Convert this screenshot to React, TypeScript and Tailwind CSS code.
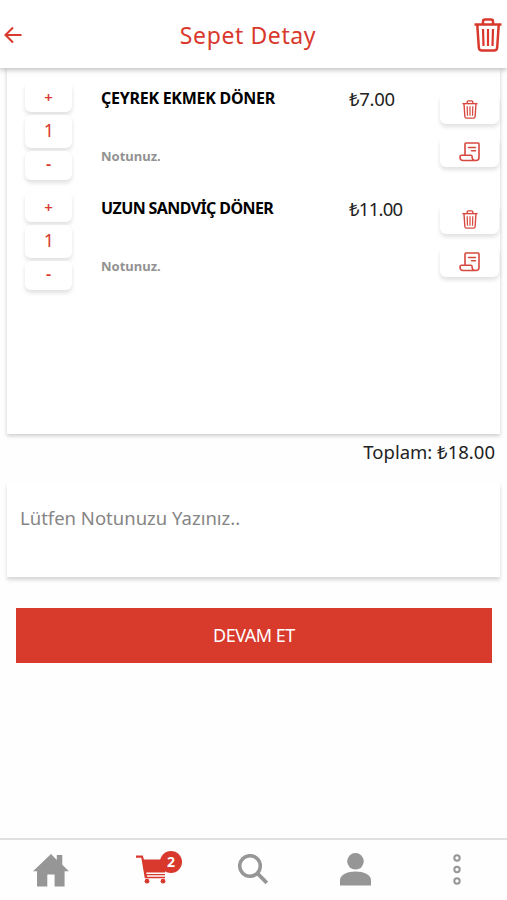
import React from "react";

type CartItem = { name: string; price: string; quantity: number; nameClass: string; priceClass: string };

const items: CartItem[] = [
  { name: "ÇEYREK EKMEK DÖNER", price: "₺7.00", quantity: 1, nameClass: "tracking-[-0.26px]", priceClass: "tracking-[-0.3px]" },
  { name: "UZUN SANDVİÇ DÖNER", price: "₺11.00", quantity: 1, nameClass: "tracking-[-0.6px]", priceClass: "tracking-[-0.75px]" },
];

function BackIcon() {
  return (
    <svg className="h-[18px] w-[18px]" viewBox="0 0 18 18" fill="none" stroke="currentColor" strokeWidth="2.1">
      <path d="M17.500 9H2M9 1.500 1.500 9 9 16.500" />
    </svg>
  );
}

function TrashIcon({ className }: { className: string }) {
  return (
    <svg className={className} viewBox="0 0 28 34" fill="none" stroke="currentColor" strokeWidth="2.500" strokeLinejoin="round">
      <path d="M.5 6.500h27" />
      <path d="M9 6V3.500Q9 1.500 11 1.500h6q2 0 2 2V6" />
      <path d="m3.300 7 1.500 22.500q.2 3 3.200 3h12q3 0 3.200-3L24.700 7" />
      <path d="m9 11 .5 17M14 11v17M19 11l-.5 17" strokeWidth="2.200" />
    </svg>
  );
}

function NoteIcon() {
  return (
    <svg className="h-[20px] w-[21px]" viewBox="0 0 21 20" fill="none" stroke="currentColor" strokeWidth="1.600" strokeLinejoin="round" strokeLinecap="round">
      <path d="M6 12.500V2Q6 1 7 1h12q1 0 1 1v13.500q0 3-3 3H4.200Q1 18.500 1 15.200q0-2 1.500-2h9.300q1.300 0 1.300 1.600 0 3.700 3.500 3.700" />
      <path d="M9.500 5.500h7M12.500 8.800h4" />
    </svg>
  );
}

function HomeIcon() {
  return (
    <svg className="h-[33px] w-[36px]" viewBox="0 0 36 33" fill="currentColor">
      <path d="M18 0 0 17.200h4V32.500h10.300V20.500h7.300v12h10V17.200H36l-6.700-6.400V1h-5.500v5z" />
    </svg>
  );
}

function CartIcon() {
  return (
    <svg className="h-[29px] w-[32px]" viewBox="0 0 32 29" fill="currentColor">
      <path d="M0 .5h6.800l1.100 4H31l-2 13H10.200l.4 1.500H29v1.200H10.800l.3 1.500H29v1.600H8.800L5.300 2.800H0z" />
      <circle cx="11" cy="26.200" r="2.400" />
      <circle cx="27" cy="26.200" r="2.400" />
    </svg>
  );
}

function SearchIcon() {
  return (
    <svg className="h-[31px] w-[31px]" viewBox="0 0 31 31" fill="none" stroke="currentColor">
      <circle cx="12" cy="12" r="10.300" strokeWidth="3.500" />
      <path d="m19.500 19.500 9.300 9.300" strokeWidth="3.800" />
    </svg>
  );
}

function UserIcon() {
  return (
    <svg className="h-[33px] w-[31px]" viewBox="0 0 31 33" fill="currentColor">
      <circle cx="15.500" cy="8.300" r="8.300" />
      <path d="M0 32.500v-5.200C0 22 7.500 18.600 15.500 18.600S31 22 31 27.300v5.200z" />
    </svg>
  );
}

function MoreIcon() {
  return (
    <svg className="h-[31px] w-[8px]" viewBox="0 0 8 31" fill="none" stroke="currentColor" strokeWidth="2">
      <circle cx="4" cy="4" r="2.700" />
      <circle cx="4" cy="15.500" r="2.700" />
      <circle cx="4" cy="27" r="2.700" />
    </svg>
  );
}

function CartRow({ item }: { item: CartItem }) {
  return (
    <li className="flex h-[110px] items-start pl-[18px]">
      <div className="flex w-[47px] flex-col gap-[3px] pt-[2px] text-[#d8392c]">
        <button className="h-[30px] rounded-[6px] bg-white text-[15px] leading-[28px] font-semibold shadow-[0_3px_4px_rgba(0,0,0,0.12)]">+</button>
        <span className="h-[33px] rounded-[6px] bg-white pl-px text-center text-[18px] leading-[31px] shadow-[0_3px_4px_rgba(0,0,0,0.12)]">{item.quantity}</span>
        <button className="h-[29px] rounded-[6px] bg-white text-[16px] leading-[24px] font-semibold shadow-[0_3px_4px_rgba(0,0,0,0.12)]"><span className="block h-[27px]">-</span></button>
      </div>
      <div className="ml-[29px] w-[248px] pt-[6px]">
        <h2 className={`h-[24px] text-[16px] leading-[24px] font-bold whitespace-nowrap text-black ${item.nameClass}`}>{item.name}</h2>
        <p className="mt-[36px] text-[13px] leading-[20px] font-bold text-[#929292]">Notunuz.</p>
      </div>
      <span className={`w-[91px] pt-[7px] text-[18.5px] leading-[24px] text-[#222] ${item.priceClass}`}>{item.price}</span>
      <div className="flex w-[59px] flex-col gap-[13px] pt-[14px] text-[#d8493f]">
        <button className="flex h-[30px] items-center justify-center rounded-[6px] bg-white shadow-[0_3px_4px_rgba(0,0,0,0.12)]">
          <TrashIcon className="h-[19px] w-[16px]" />
        </button>
        <button className="flex h-[30px] items-center justify-center rounded-[6px] bg-white shadow-[0_3px_4px_rgba(0,0,0,0.12)]">
          <NoteIcon />
        </button>
      </div>
    </li>
  );
}

export default function App() {
  return (
    <div className="flex h-[900px] w-[507px] flex-col overflow-hidden bg-[#fefefe] font-['Noto_Sans',sans-serif]">
      <header className="z-10 flex h-[68px] shrink-0 items-center justify-between bg-white pt-[2px] pr-[5px] pl-[4px] text-[#d8392c] shadow-[0_2px_5px_rgba(0,0,0,0.25)]">
        <div className="w-[18px]"><BackIcon /></div>
        <h1 className="text-[23px] leading-[32px] tracking-[0.6px]">Sepet Detay</h1>
        <TrashIcon className="h-[34px] w-[28px]" />
      </header>
      <main className="flex flex-1 flex-col">
        <ul className="mx-[7px] h-[366px] bg-white pt-[12px] shadow-[0_2px_4px_rgba(0,0,0,0.2)]">
          {items.map((item) => <CartRow key={item.name} item={item} />)}
        </ul>
        <p className="h-[49px] pt-[5px] pr-[12px] text-right text-[18.5px] leading-[26px] text-[#222]">Toplam: ₺18.00</p>
        <div className="mx-[7px] h-[94px] bg-white px-[13px] pt-[22px] text-[18.5px] leading-[26px] text-[#868686] shadow-[0_3px_4px_rgba(0,0,0,0.16)]">
          Lütfen Notunuzu Yazınız..
        </div>
        <button className="mt-[31px] mr-[15px] ml-[16px] h-[55px] bg-[#d83a2c] text-[18px] tracking-[-0.5px] text-white">DEVAM ET</button>
      </main>
      <nav className="grid h-[62px] shrink-0 grid-cols-5 justify-items-center border-t-2 border-[#e0e0e0] text-[#969696]">
        <a className="pt-[14px]"><HomeIcon /></a>
        <a className="relative pt-[15px] text-[#d8392c]">
          <CartIcon />
          <span className="absolute top-[11px] left-[24px] flex h-[22px] w-[22px] items-center justify-center rounded-full bg-[#d8392c] text-[14px] leading-none font-bold text-white">2</span>
        </a>
        <a className="pt-[14px] pl-px"><SearchIcon /></a>
        <a className="pt-[13px] pl-px"><UserIcon /></a>
        <a className="pt-[14px] pl-px"><MoreIcon /></a>
      </nav>
    </div>
  );
}
